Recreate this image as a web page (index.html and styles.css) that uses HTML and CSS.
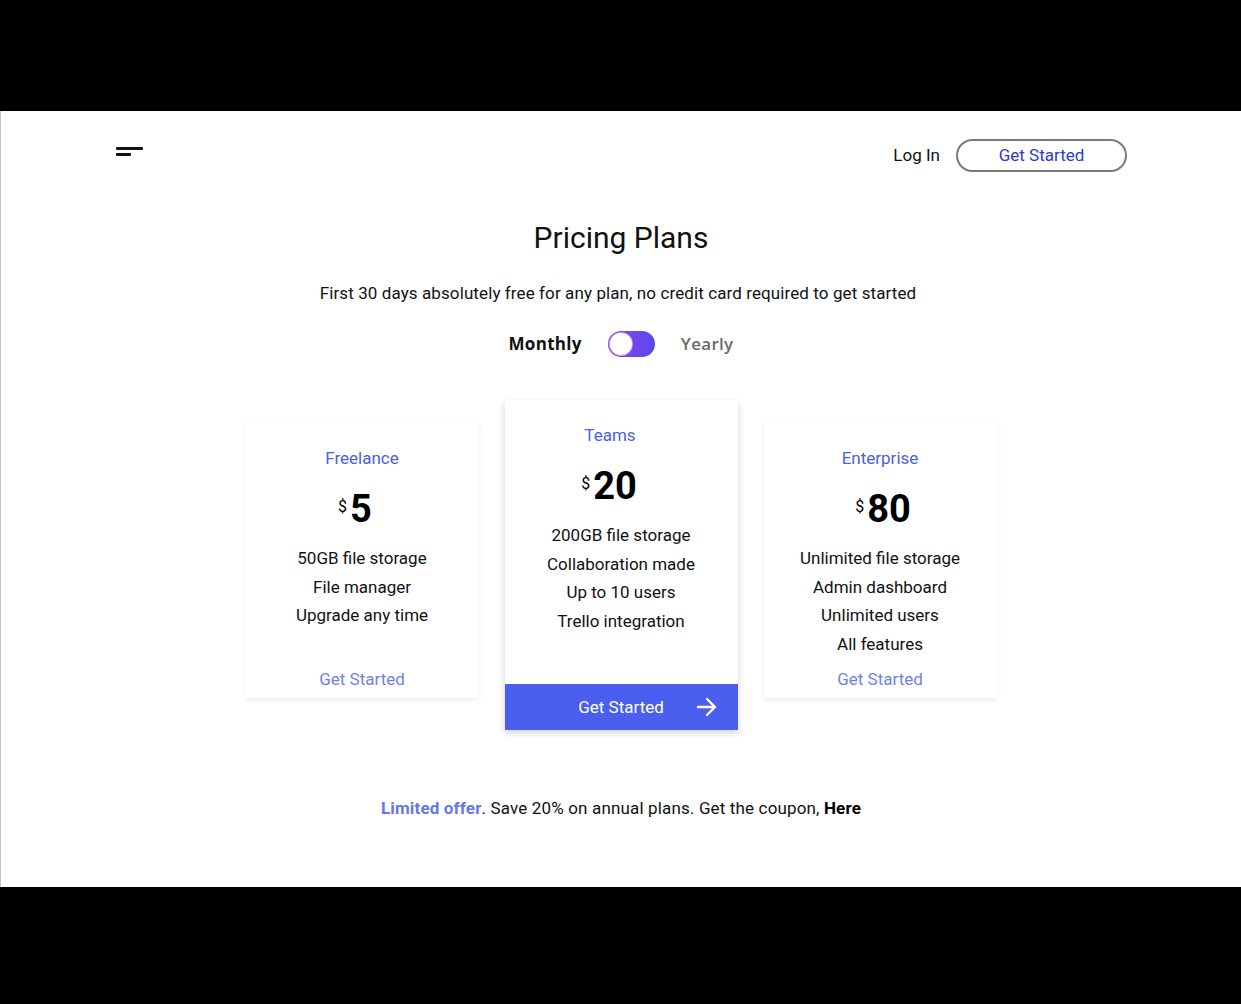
FILE: index.html
```html
<!DOCTYPE html>
<html>
<head>
<meta charset="utf-8">
<link rel="stylesheet" href="styles.css">
</head>
<body>
<div class="page">
  <header class="header">
    <div class="menu"><span class="bar long"></span><span class="bar short"></span></div>
    <div class="nav">
      <a class="login">Log In</a>
      <a class="nav-btn">Get Started</a>
    </div>
  </header>
  <h1 class="title">Pricing Plans</h1>
  <p class="subtitle">First 30 days absolutely free for any plan, no credit card required to get started</p>
  <div class="toggle-row">
    <span class="period active">Monthly</span>
    <span class="switch"><span class="knob"></span></span>
    <span class="period">Yearly</span>
  </div>
  <div class="cards">
    <div class="card side">
      <div class="plan">Freelance</div>
      <div class="price price-freelance"><span class="cur">$</span><span class="amt">5</span></div>
      <ul class="features">
        <li>50GB file storage</li>
        <li>File manager</li>
        <li>Upgrade any time</li>
      </ul>
      <a class="card-link">Get Started</a>
    </div>
    <div class="card featured">
      <div class="card-body">
        <div class="plan plan-teams">Teams</div>
        <div class="price price-teams"><span class="cur">$</span><span class="amt">20</span></div>
        <ul class="features">
          <li>200GB file storage</li>
          <li>Collaboration made</li>
          <li>Up to 10 users</li>
          <li>Trello integration</li>
        </ul>
      </div>
      <a class="card-btn">Get Started
        <svg class="arrow" width="22" height="22" viewBox="0 0 22 22" fill="none" stroke="#fff" stroke-width="2.4" stroke-linecap="round" stroke-linejoin="round"><path d="M2 11h17M11 3l8 8-8 8"/></svg>
      </a>
    </div>
    <div class="card side">
      <div class="plan">Enterprise</div>
      <div class="price price-enterprise"><span class="cur">$</span><span class="amt">80</span></div>
      <ul class="features">
        <li>Unlimited file storage</li>
        <li>Admin dashboard</li>
        <li>Unlimited users</li>
        <li>All features</li>
      </ul>
      <a class="card-link">Get Started</a>
    </div>
  </div>
  <p class="offer"><span class="hl">Limited offer</span>. Save 20% on annual plans. Get the coupon, <b>Here</b></p>
</div>
</body>
</html>
```
FILE: styles.css
```css
html, body {
  margin: 0;
  padding: 0;
  background: #000;
}
body {
  padding-top: 111px;
  height: 1004px;
  box-sizing: border-box;
  font-family: Roboto, "Liberation Sans", sans-serif;
  color: #111;
}
.page {
  background: #fff;
  height: 776px;
  border-left: 1px solid #c4c4c4;
  box-sizing: border-box;
  display: flex;
  flex-direction: column;
  align-items: center;
}
.header {
  width: 100%;
  box-sizing: border-box;
  display: flex;
  justify-content: space-between;
  align-items: flex-start;
  padding: 28px 114px 0 115px;
}
.menu {
  display: flex;
  flex-direction: column;
  gap: 3px;
  margin-top: 8px;
}
.bar {
  display: block;
  height: 3px;
  background: #111;
  border-radius: 1px;
}
.bar.long { width: 27px; }
.bar.short { width: 15px; }
.nav {
  display: flex;
  align-items: center;
  gap: 16px;
}
.login {
  font-size: 17px;
  color: #111;
  margin-top: -1px;
}
.nav-btn {
  width: 171px;
  height: 33px;
  box-sizing: border-box;
  border: 2px solid #7a7a7a;
  border-radius: 17px;
  display: flex;
  align-items: center;
  justify-content: center;
  padding-bottom: 1px;
  font-size: 17px;
  color: #2b3bd8;
}
.title {
  margin: 48px 0 0;
  font-size: 30px;
  line-height: 36px;
  font-weight: 400;
  color: #111;
}
.subtitle {
  margin: 25px 6px 0 0;
  font-size: 17px;
  line-height: 24px;
  letter-spacing: 0.1px;
  color: #111;
}
.toggle-row {
  margin-top: 26px;
  display: flex;
  align-items: center;
  height: 26px;
}
.period {
  font-family: "Open Sans", sans-serif;
  font-size: 17px;
  font-weight: 600;
  color: #6a6a6a;
  letter-spacing: 0.3px;
  margin-top: -1px;
}
.period.active {
  font-weight: 700;
  color: #111;
}
.switch {
  margin: 0 26px;
  width: 47px;
  height: 26px;
  border-radius: 13px;
  background: linear-gradient(90deg, #8c48e6, #5a46ee);
  display: flex;
  align-items: center;
  padding-left: 2px;
  box-sizing: border-box;
}
.knob {
  width: 22px;
  height: 22px;
  border-radius: 50%;
  background: #fff;
  box-shadow: 0 0 0 1px #b9a3ee;
}
.cards {
  margin-top: 43px;
  display: flex;
  align-items: flex-start;
  gap: 26px;
}
.card {
  width: 233px;
  background: #fff;
  display: flex;
  flex-direction: column;
  align-items: center;
  text-align: center;
}
.card.side {
  margin-top: 22px;
  height: 276px;
  box-sizing: border-box;
  padding: 24px 0 7px;
  box-shadow: 0 2px 5px rgba(40, 50, 120, 0.09);
}
.card.featured {
  box-shadow: 0 3px 7px rgba(30, 40, 110, 0.2);
}
.card-body {
  height: 284px;
  box-sizing: border-box;
  padding-top: 23px;
  display: flex;
  flex-direction: column;
  align-items: center;
}
.plan {
  font-size: 17px;
  line-height: 24px;
  color: #4b5fe0;
}
.plan-teams {
  margin-right: 22px;
}
.price {
  margin-top: 17px;
  height: 44px;
  display: flex;
  align-items: center;
  color: #000;
}
.price-freelance { margin-right: 14px; }
.price-teams { margin-right: 24px; }
.price-enterprise { margin-left: 6px; }
.cur {
  font-size: 16px;
  margin-right: 3px;
  margin-top: -6px;
}
.amt {
  font-size: 38px;
  font-weight: 700;
}
.features {
  list-style: none;
  margin: 13px 0 0;
  padding: 0;
  font-size: 17px;
  line-height: 28.5px;
  color: #111;
}
.card-link {
  margin-top: auto;
  font-size: 17px;
  line-height: 24px;
  color: #7182e6;
}
.card-btn {
  width: 100%;
  height: 46px;
  background: #4a5ff0;
  color: #fff;
  font-size: 17px;
  display: flex;
  align-items: center;
  justify-content: center;
  position: relative;
}
.arrow {
  position: absolute;
  right: 20px;
  top: 12px;
}
.offer {
  margin: 66px 0 0;
  font-size: 17px;
  line-height: 24px;
  letter-spacing: 0.15px;
  color: #111;
}
.offer .hl {
  font-weight: 700;
  color: #6677e8;
}
.offer b {
  font-weight: 700;
  color: #000;
}
```
